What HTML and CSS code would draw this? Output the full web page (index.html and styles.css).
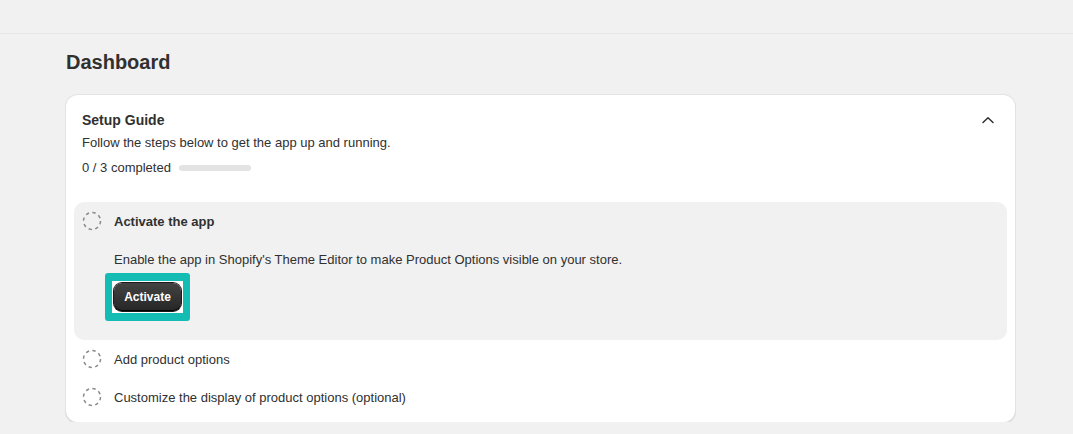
FILE: index.html
```html
<!DOCTYPE html>
<html>
<head>
<title>Dashboard</title>
<link rel="stylesheet" href="styles.css">
</head>
<body>

<div class="top_bar"></div>

<div class="page">
<h1 class="page_ttl">Dashboard</h1>

<div class="card">
  <div class="card_hdr">
    <div class="card_ttl">Setup Guide</div>
    <svg class="chev" width="20" height="20" viewBox="0 0 20 20"><path d="M5 12.5 10 7.7l5 4.8" fill="none" stroke="#303030" stroke-width="1.5" stroke-linecap="round" stroke-linejoin="round"/></svg>
  </div>
  <div class="card_sub">Follow the steps below to get the app up and running.</div>
  <div class="prog">
    <span>0 / 3 completed</span>
    <div class="prog_bar"></div>
  </div>

  <div class="steps">
    <div class="step step_open">
      <div class="step_row">
        <svg class="circ" width="20" height="20" viewBox="0 0 20 20"><circle cx="10" cy="10" r="8.5" fill="none" stroke="#8a8a8a" stroke-width="1.5" stroke-dasharray="3.3 3.4"/></svg>
        <b>Activate the app</b>
      </div>
      <div class="step_body">
        <p>Enable the app in Shopify's Theme Editor to make Product Options visible on your store.</p>
        <span class="hl"><button class="btn">Activate</button></span>
      </div>
    </div>
    <div class="step">
      <div class="step_row">
        <svg class="circ" width="20" height="20" viewBox="0 0 20 20"><circle cx="10" cy="10" r="8.5" fill="none" stroke="#8a8a8a" stroke-width="1.5" stroke-dasharray="3.3 3.4"/></svg>
        <span>Add product options</span>
      </div>
    </div>
    <div class="step">
      <div class="step_row">
        <svg class="circ" width="20" height="20" viewBox="0 0 20 20"><circle cx="10" cy="10" r="8.5" fill="none" stroke="#8a8a8a" stroke-width="1.5" stroke-dasharray="3.3 3.4"/></svg>
        <span>Customize the display of product options (optional)</span>
      </div>
    </div>
  </div>
</div>
</div>

</body>
</html>
```

FILE: styles.css
```css
body {margin:0;background:#f1f1f1;font-family:"Liberation Sans", Arial, sans-serif;color:#303030;font-size:13px;}

.top_bar {height:33px;border-bottom:1px solid #e6e6e6;}

.page {padding:0 58px 0 66px;}
.page_ttl {margin:0;padding:16px 0 0;font-size:20px;line-height:24px;font-weight:bold;color:#303030;}

.card {margin-top:21px;background:#fff;border-radius:12px;box-shadow:0 0 0 1px #e3e3e3, 0 1px 0 1px #d6d6d6;padding:16px 8px 6px;}
.card_hdr {display:flex;justify-content:space-between;align-items:center;height:18px;padding:0 8px;}
.card_ttl {font-size:14px;font-weight:bold;line-height:18px;}
.chev {margin-right:1px;}
.card_sub {margin-top:4px;padding:0 8px;line-height:20px;}
.prog {display:flex;align-items:center;gap:8px;margin-top:5px;padding:0 8px;line-height:20px;}
.prog_bar {width:72px;height:6px;border-radius:4px;background:#e3e3e3;}

.steps {margin-top:24px;}
.step {padding:8px;border-radius:10px;}
.step_open {background:#f1f1f1;padding-bottom:19px;}
.step_row {display:flex;align-items:center;gap:12px;height:22px;}
.circ {flex:none;}
.step_body {padding-left:32px;}
.step_body p {margin:18px 0 3px;line-height:20px;}

.hl {display:inline-block;margin-left:-9px;background:#fff;border:7px solid #15bcb4;border-top-width:8px;border-bottom-width:8px;padding:2px;border-radius:3px;}
.btn {display:block;height:28px;width:67px;border:0;border-radius:8px;background:linear-gradient(#434343,#262626);color:#fff;font-family:"Liberation Sans", Arial, sans-serif;font-size:12px;font-weight:bold;box-shadow:inset 0 -1px 0 #000, 0 0 0 1px #1a1a1a;}
```
